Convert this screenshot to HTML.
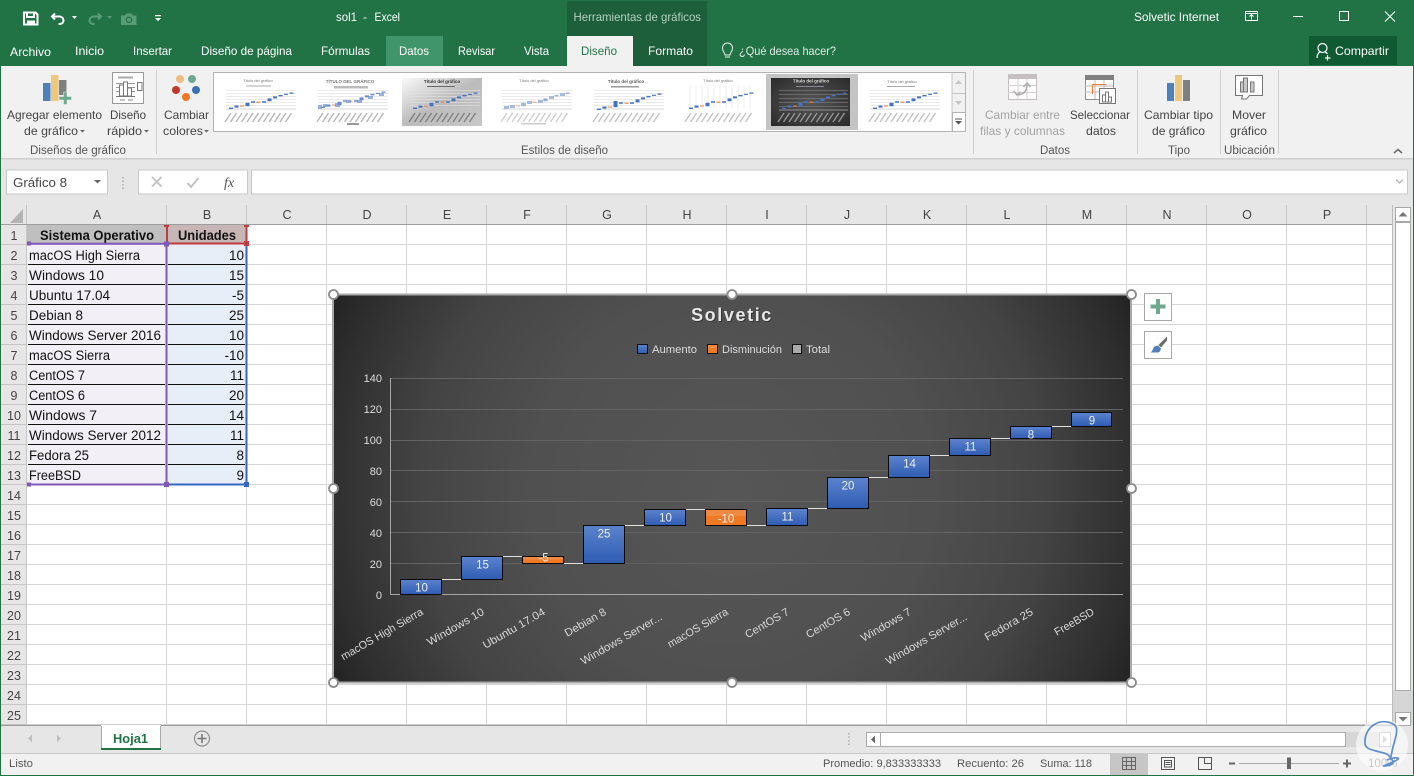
<!DOCTYPE html>
<html><head><meta charset="utf-8"><title>sol1 - Excel</title>
<style>
html,body{margin:0;padding:0;background:#fff;overflow:hidden}
svg{display:block;font-family:"Liberation Sans",sans-serif}
.t{fill:#fff;font-size:12px}
.r{fill:#444;font-size:12px}
.g{fill:#555;font-size:11.5px}
.c{fill:#111;font-size:13.5px}
.n{fill:#111;font-size:13.5px;text-anchor:end}
.h{fill:#444;font-size:12.5px;text-anchor:middle}
.w{fill:#eee;font-size:11.5px;text-anchor:middle}
.y{fill:#ddd;font-size:11px;text-anchor:end}
.l{fill:#d8d8d8;font-size:11px;text-anchor:end}
.s{fill:#555;font-size:11px}
.m{font-size:4px;text-anchor:middle;fill:#777}
</style></head><body>
<svg width="1414" height="776" viewBox="0 0 1414 776" xmlns="http://www.w3.org/2000/svg">
<defs>
<radialGradient id="bg" gradientUnits="userSpaceOnUse" cx="732" cy="490" r="445">
<stop offset="0" stop-color="#565656"/><stop offset=".45" stop-color="#505050"/><stop offset=".7" stop-color="#444"/><stop offset=".9" stop-color="#2f2f2f"/><stop offset="1" stop-color="#222"/>
</radialGradient>
<linearGradient id="bl" x1="0" y1="0" x2="0" y2="1"><stop offset="0" stop-color="#5b83ce"/><stop offset="1" stop-color="#2f5cb2"/></linearGradient>
<linearGradient id="or" x1="0" y1="0" x2="0" y2="1"><stop offset="0" stop-color="#f08a42"/><stop offset=".4" stop-color="#f08a42"/><stop offset=".41" stop-color="#ee7a26"/><stop offset="1" stop-color="#ee7a26"/></linearGradient>
<linearGradient id="gy" x1="0" y1="0" x2="1" y2="1"><stop offset="0" stop-color="#fafafa"/><stop offset=".5" stop-color="#bbb"/><stop offset="1" stop-color="#c8c8c8"/></linearGradient>
<radialGradient id="dk" cx=".5" cy=".5" r=".7"><stop offset="0" stop-color="#575757"/><stop offset="1" stop-color="#2a2a2a"/></radialGradient>
<g id="tb">
<path fill="#4472c4" d="M11 29.600h4V31h-4zM16.500 27.500h4v2.100h-4zM27.500 24.700h4v3.500h-4zM33 23.300h4v1.400h-4zM44 23.200h4v1.500h-4zM49.500 20.400h4v2.800h-4zM55 18.400h4v2h-4zM60.500 16.900h4v1.500h-4zM66 15.700h4v1.200h-4zM71.500 14.500h4v1.200h-4z"/>
<path fill="#ed7d31" d="M22 27.500h4v1h-4zM38.500 23.600h4v1.100h-4z"/>
</g>
<g id="tg"><path stroke="#e4e4e4" stroke-width=".7" fill="none" d="M8 12.500H78M8 15.500H78M8 18.500H78M8 21.500H78M8 24.500H78M8 27.500H78"/><path stroke="#c8c8c8" stroke-width=".7" d="M8 31H78"/></g>
<g id="tl" stroke-width="1.400" fill="none" opacity=".7"><path d="M7 44l6-9M12.500 44l6-9M18 44l6-9M23.500 44l6-9M29 44l6-9M34.500 44l6-9M40 44l6-9M45.500 44l6-9M51 44l6-9M56.500 44l6-9M62 44l6-9M67.500 44l6-9"/></g>
<circle id="hd" r="4.500" fill="#fff" stroke="#8c8c8c" stroke-width="1.800"/>
</defs>

<!-- Window base -->
<rect width="1414" height="776" fill="#e6e6e6"/>
<rect width="1414" height="66" fill="#217346"/>
<rect x="0" y="66" width="1414" height="92" fill="#f1f1f1"/>
<rect x="0" y="158" width="1414" height="1.500" fill="#cfcfcf"/>

<!-- QAT -->
<g fill="none" stroke="#fff">
<path stroke-width="2" d="M24 12.500h11.500l2 2v10h-13.500z"/>
<path stroke-width="2" d="M27 13v4h7v-4"/><rect x="27" y="20.500" width="8" height="4" fill="#fff" stroke="none"/>
<path stroke-width="2" d="M55 13.500l-3 3 3 3M52.500 16.500h7a4 4 0 0 1 4 4 3.500 3.500 0 0 1-3.500 3.500h-1.500"/>
</g>
<path fill="#fff" d="M72 16h5l-2.500 3z"/>
<g fill="none" stroke="#5a9b78" stroke-width="2"><path d="M98 13.500l3 3-3 3M100.500 16.500h-7a4 4 0 0 0-4 4 3.500 3.500 0 0 0 3.500 3.500h1.500"/></g>
<path fill="#5a9b78" d="M107 16h5l-2.500 3zM121 15.500h4l1.500-2h5l1.500 2h3.500v9.500h-15.500z"/><circle cx="129" cy="19.800" r="2.700" fill="none" stroke="#217346" stroke-width="1.200"/>
<path fill="#fff" d="M155 15h6v1.300h-6zM155 18h6l-3 3.200z"/>
<text class="t" x="336" y="21" textLength="21" lengthAdjust="spacingAndGlyphs">sol1</text>
<text class="t" x="363" y="21">-</text>
<text class="t" x="374.500" y="21" textLength="25.500" lengthAdjust="spacingAndGlyphs">Excel</text>

<!-- contextual tab -->
<rect x="567" y="1" width="140" height="65" fill="#1d5e3b"/>
<text x="573.500" y="21" textLength="127.500" lengthAdjust="spacingAndGlyphs" style="font-size:12px;fill:#b3d1c1">Herramientas de gráficos</text>

<!-- right title -->
<text class="t" x="1134" y="21" textLength="85" lengthAdjust="spacingAndGlyphs">Solvetic Internet</text>
<g fill="none" stroke="#fff" stroke-width="1"><rect x="1245.500" y="11.500" width="12" height="9"/><path d="M1245.500 13.500h12M1251.500 19.500v-4.500M1249.500 16.500l2-2 2 2"/>
<path d="M1293 16.500h10M1339.500 11.500h9v9h-9zM1385 11.500l10 10M1395 11.500l-10 10"/></g>

<!-- tabs -->
<rect x="386" y="36" width="57" height="30" fill="#41956a"/>
<rect x="567" y="36" width="66" height="30" fill="#f1f1f1"/>
<text class="t" x="10" y="56" textLength="41" lengthAdjust="spacingAndGlyphs">Archivo</text>
<text class="t" x="75" y="55" textLength="29" lengthAdjust="spacingAndGlyphs">Inicio</text>
<text class="t" x="133" y="55" textLength="39" lengthAdjust="spacingAndGlyphs">Insertar</text>
<text class="t" x="201" y="55" textLength="91" lengthAdjust="spacingAndGlyphs">Diseño de página</text>
<text class="t" x="321" y="55" textLength="49" lengthAdjust="spacingAndGlyphs">Fórmulas</text>
<text class="t" x="399" y="55" textLength="30" lengthAdjust="spacingAndGlyphs">Datos</text>
<text class="t" x="458" y="55" textLength="37" lengthAdjust="spacingAndGlyphs">Revisar</text>
<text class="t" x="524" y="55" textLength="25" lengthAdjust="spacingAndGlyphs">Vista</text>
<text x="581" y="55" textLength="36" lengthAdjust="spacingAndGlyphs" style="font-size:12px;fill:#217346">Diseño</text>
<text class="t" x="648" y="55" textLength="45" lengthAdjust="spacingAndGlyphs">Formato</text>
<g fill="none" stroke="#e6f0ea" stroke-width="1"><path d="M725 55c0-2-2.500-3.500-2.500-7a5 5 0 0 1 10 0c0 3.500-2.500 5-2.500 7zM725 57h5"/></g>
<text x="739" y="55" textLength="97" lengthAdjust="spacingAndGlyphs" style="font-size:12px;fill:#e0ebe5">¿Qué desea hacer?</text>
<rect x="1309" y="36" width="88" height="29" fill="#0f5a32"/>
<g fill="none" stroke="#fff" stroke-width="1.200"><circle cx="1322.500" cy="48" r="4.500"/><path d="M1317 58c0-4 2-6 4-6.500M1325 52c1 .3 2 1 2.500 2M1327.500 55v5.500M1325 58h5.500"/></g>
<text class="t" x="1335" y="55" textLength="54" lengthAdjust="spacingAndGlyphs">Compartir</text>

<!-- Ribbon: separators -->
<path stroke="#d0d0d0" d="M156.500 70v84M973.500 70v84M1137.500 70v84M1220.500 70v84M1278.500 70v84"/>

<!-- Agregar elemento -->
<rect x="43" y="83" width="7.500" height="18" fill="#4f81b8"/><rect x="51" y="75" width="7.500" height="26" fill="#edc77d"/><rect x="59" y="80" width="7.500" height="15" fill="#7f7f7f"/>
<path fill="#6fa98f" d="M63.500 92h3.500v4.500h4.500v3.500H67v4.500h-3.500V100H59v-3.500h4.500z" stroke="#f1f1f1" stroke-width=".5"/>
<text class="r" x="7" y="119" textLength="95" lengthAdjust="spacingAndGlyphs">Agregar elemento</text>
<text class="r" x="24" y="135" textLength="54" lengthAdjust="spacingAndGlyphs">de gráfico</text><path fill="#666" d="M80 130h5l-2.500 2.500z"/>

<!-- Diseno rapido -->
<rect x="112.500" y="72.500" width="31" height="31" fill="#fff" stroke="#9a9a9a"/>
<path stroke="#aaa" stroke-width="2" d="M118 77.500h15"/><path fill="none" stroke="#999" d="M116 83.500h19M116 87.500h19M116 91.500h19"/>
<path fill="#fff" stroke="#777" d="M119.500 96v-11h4v11zM123.500 96v-14h4v14zM127.500 96v-8h4v8z"/><path stroke="#777" d="M116 96.500h19"/>
<rect x="137.500" y="82.500" width="4.500" height="8" fill="#fff" stroke="#777"/>
<path stroke="#888" d="M120 100h5M128 100h5"/>
<text class="r" x="110" y="119" textLength="36" lengthAdjust="spacingAndGlyphs">Diseño</text>
<text class="r" x="107" y="135" textLength="35" lengthAdjust="spacingAndGlyphs">rápido</text><path fill="#666" d="M144 130h5l-2.500 2.500z"/>

<!-- Cambiar colores -->
<circle cx="180" cy="79" r="4" fill="#eebc80"/><circle cx="192" cy="79" r="4" fill="#70a78f"/><circle cx="176" cy="90" r="4" fill="#c0392b"/><circle cx="196" cy="90" r="4" fill="#3a70b5"/><circle cx="186" cy="97" r="4" fill="#ee7724"/>
<text class="r" x="164" y="119" textLength="45" lengthAdjust="spacingAndGlyphs">Cambiar</text>
<text class="r" x="163" y="135" textLength="40" lengthAdjust="spacingAndGlyphs">colores</text><path fill="#666" d="M204 130h5l-2.500 2.500z"/>
<text class="g" x="30" y="154" textLength="96" lengthAdjust="spacingAndGlyphs">Diseños de gráfico</text>

<!-- Gallery -->
<rect x="213.500" y="72.500" width="752" height="59" fill="#fff" stroke="#b4b4b4"/>
<rect x="766" y="74" width="92" height="56" fill="#c4c4c4"/>
<g transform="translate(218,78)"><text class="m" x="40" y="4">Título del gráfico</text><rect x="28" y="7.500" width="25" height="1" fill="#aaa"/><use href="#tg"/><use href="#tb"/><g stroke="#999"><use href="#tl"/></g></g>
<g transform="translate(310,78)"><text class="m" x="40" y="5" style="font-weight:bold;font-size:4.500px">TÍTULO DEL GRÁFICO</text><rect x="24" y="8" width="34" height="2.500" fill="#bbb"/><use href="#tg"/><g opacity=".8"><use href="#tb" transform="translate(0,-1)"/></g><path fill="#6f93d0" d="M8 27h4v4H8zM13 26h4v3h-4zM25 25h5v4h-5zM36 22h5v3h-5zM47 22h5v3h-5zM58 18h5v3h-5zM69 15h5v3h-5z" opacity=".7"/><g stroke="#999"><use href="#tl"/></g><rect x="37" y="45" width="12" height="2" fill="#999"/></g>
<rect x="402" y="78" width="80" height="48" fill="url(#gy)"/>
<g transform="translate(402,78)"><text class="m" x="40" y="5" style="font-weight:bold;font-size:4.500px;fill:#333">Título del gráfico</text><rect x="25" y="8" width="28" height="1" fill="#666"/><g opacity=".8"><use href="#tg"/></g><use href="#tb"/><g stroke="#666"><use href="#tl"/></g></g>
<g transform="translate(494,78)"><text class="m" x="40" y="4">Título del gráfico</text><use href="#tg"/><g opacity=".55"><use href="#tb"/></g><path fill="#a9bbdd" d="M10 28h5v3h-5zM16 27h5v3h-5zM27 25h5v3h-5zM33 23h5v3h-5zM44 22h5v3h-5zM55 18h5v3h-5zM66 15h5v3h-5z"/><g stroke="#bbb"><use href="#tl"/></g><rect x="27" y="45" width="25" height="1.500" fill="#ccc"/></g>
<g transform="translate(586,78)"><text class="m" x="40" y="5" style="font-weight:bold;font-size:4.500px;fill:#555">Título del gráfico</text><rect x="25" y="8" width="28" height="1.500" fill="#999"/><use href="#tg"/><use href="#tb" transform="translate(0,1)"/><path fill="#4472c4" d="M27.500 23h4v6h-4z"/><g stroke="#aaa"><use href="#tl"/></g></g>
<g transform="translate(678,78)"><text class="m" x="40" y="4">Título del gráfico</text><path stroke="#e6e6e6" stroke-width=".7" d="M12 7V30M18 7V30M24 7V30M30 7V30M36 7V30M42 7V30M48 7V30M54 7V30M60 7V30M66 7V30M72 7V30"/><use href="#tb"/><g stroke="#aaa"><use href="#tl"/></g></g>
<rect x="771" y="78" width="79" height="48" fill="url(#dk)"/>
<g transform="translate(771,78)"><text class="m" x="40" y="4.500" style="font-weight:bold;font-size:4.500px;fill:#ddd">Título del gráfico</text><rect x="25" y="8" width="28" height="1" fill="#889"/><path stroke="#777" stroke-width=".7" d="M8 12.500H77M8 16.500H77M8 20.500H77M8 24.500H77M8 28.500H77"/><path stroke="#aaa" stroke-width=".7" d="M8 32H77"/><use href="#tb"/><g stroke="#bbb"><use href="#tl"/></g></g>
<g transform="translate(862,78)"><text class="m" x="40" y="5">Título del gráfico</text><rect x="25" y="8" width="28" height="1" fill="#aaa"/><use href="#tg"/><use href="#tb"/><g stroke="#aaa"><use href="#tl"/></g></g>
<rect x="952" y="73" width="13" height="58" fill="#f1f1f1"/>
<path stroke="#c4c4c4" fill="none" d="M952 72.500v59M952 93.500h13M952 112.500h13"/>
<rect x="952.500" y="112.500" width="13" height="19" fill="#fff" stroke="#b4b4b4"/>
<path fill="#c6c6c6" d="M955 84l3.500-4 3.500 4zM955 101h7l-3.500 4z"/>
<path fill="#555" d="M955 118.500h7v1h-7zM955 121h7l-3.500 3.500z"/>
<text class="g" x="521" y="154" textLength="87" lengthAdjust="spacingAndGlyphs">Estilos de diseño</text>

<!-- Datos -->
<g opacity=".95"><rect x="1008.500" y="74.500" width="28" height="25" fill="#fff" stroke="#c4bdc0"/><rect x="1008" y="74" width="29" height="5" fill="#c4bdc0"/><path stroke="#d4cfd1" d="M1018 79v20M1027 79v20M1008 85.500h28M1008 92.500h28"/><path fill="none" stroke="#a8a8a8" stroke-width="1.500" d="M1017 95c6 0 10-4 10-10M1013.500 91l3.500 4 3.500-3M1023.500 87l3.500-4 3.500 4"/></g>
<text x="985" y="119" textLength="75" lengthAdjust="spacingAndGlyphs" style="font-size:12px;fill:#a3a3a3">Cambiar entre</text>
<text x="980" y="135" textLength="85" lengthAdjust="spacingAndGlyphs" style="font-size:12px;fill:#a3a3a3">filas y columnas</text>
<rect x="1085.500" y="75.500" width="28" height="24" fill="#fff" stroke="#909090"/><rect x="1085" y="75" width="29" height="5" fill="#7f7f7f"/><path stroke="#bbb" d="M1095 80v19M1104 80v19M1085 86h28M1085 92h28"/><path fill="none" stroke="#ed7d31" d="M1092.500 94v-9.500h14"/>
<rect x="1099.500" y="88.500" width="16" height="15" fill="#fff" stroke="#777"/><path fill="#fff" stroke="#777" d="M1102.500 102v-7h3v7zM1105.500 102v-10h3v10zM1108.500 102v-5h3v5z"/>
<text class="r" x="1070" y="119" textLength="60" lengthAdjust="spacingAndGlyphs">Seleccionar</text>
<text class="r" x="1086" y="135" textLength="30" lengthAdjust="spacingAndGlyphs">datos</text>
<text class="g" x="1040" y="154" textLength="30" lengthAdjust="spacingAndGlyphs">Datos</text>

<!-- Tipo -->
<rect x="1167" y="83" width="7" height="18" fill="#4f81b8"/><rect x="1175" y="75" width="7" height="26" fill="#edc77d"/><rect x="1183" y="80" width="7" height="21" fill="#7f7f7f"/>
<text class="r" x="1144" y="119" textLength="69" lengthAdjust="spacingAndGlyphs">Cambiar tipo</text>
<text class="r" x="1152" y="135" textLength="53" lengthAdjust="spacingAndGlyphs">de gráfico</text>
<text class="g" x="1168" y="154" textLength="22" lengthAdjust="spacingAndGlyphs">Tipo</text>

<!-- Ubicacion -->
<path fill="#fff" stroke="#777" d="M1235.500 75.500h27v20h-13l-3 3.500h-5l1-3.500h-7z"/>
<path fill="#c8c8c8" stroke="#777" d="M1240.500 92v-10h3v10zM1243.500 92v-14h4v14zM1250.500 92v-10h3.500v10z"/>
<text class="r" x="1232" y="119" textLength="34" lengthAdjust="spacingAndGlyphs">Mover</text>
<text class="r" x="1230" y="135" textLength="37" lengthAdjust="spacingAndGlyphs">gráfico</text>
<text class="g" x="1224" y="154" textLength="51" lengthAdjust="spacingAndGlyphs">Ubicación</text>
<path fill="none" stroke="#666" stroke-width="1.500" d="M1394 153l4-3.500 4 3.500"/>

<!-- Formula bar -->
<rect x="6.500" y="170" width="101" height="24" fill="#fff" stroke="#c8c8c8"/>
<text x="13" y="187" textLength="54" lengthAdjust="spacingAndGlyphs" style="font-size:12.500px;fill:#444">Gráfico 8</text>
<path fill="#666" d="M94 180h7l-3.500 3.500z"/>
<path stroke="#aaa" stroke-width="1.500" stroke-dasharray="1.500 2" d="M123 177v12"/>
<rect x="138.500" y="170" width="109" height="24" fill="#fff" stroke="#c8c8c8"/>
<path fill="none" stroke="#c0c0c0" stroke-width="1.800" d="M152 177l9.500 9.500M161.500 177l-9.500 9.500M187.500 183l3.500 4 7.500-9"/>
<text x="224" y="187" style="font-family:'Liberation Serif',serif;font-style:italic;font-size:14px;fill:#555">fx</text>
<rect x="251.500" y="170" width="1156" height="24" fill="#fff" stroke="#c8c8c8"/>
<path fill="none" stroke="#bbb" stroke-width="1.500" d="M1396 179.500l3.500 3.500 3.500-3.500"/>

<!-- Sheet -->
<rect x="1" y="225" width="1391" height="500" fill="#fff"/>
<rect x="1" y="205" width="1392" height="19" fill="#e6e6e6"/>
<rect x="1" y="224" width="25" height="501" fill="#e6e6e6"/>
<path fill="#b4b4b4" d="M23 209v14H10z"/>
<path stroke="#d6d6d6" fill="none" d="M26.500 224.500H1392M26.500 244.500H1392M26.500 264.500H1392M26.500 284.500H1392M26.500 304.500H1392M26.500 324.500H1392M26.500 344.500H1392M26.500 364.500H1392M26.500 384.500H1392M26.500 404.500H1392M26.500 424.500H1392M26.500 444.500H1392M26.500 464.500H1392M26.500 484.500H1392M26.500 504.500H1392M26.500 524.500H1392M26.500 544.500H1392M26.500 564.500H1392M26.500 584.500H1392M26.500 604.500H1392M26.500 624.500H1392M26.500 644.500H1392M26.500 664.500H1392M26.500 684.500H1392M26.500 704.500H1392M166.500 224V724M246.500 224V724M326.500 224V724M406.500 224V724M486.500 224V724M566.500 224V724M646.500 224V724M726.500 224V724M806.500 224V724M886.500 224V724M966.500 224V724M1046.500 224V724M1126.500 224V724M1206.500 224V724M1286.500 224V724M1366.500 224V724"/>
<path stroke="#c6c6c6" fill="none" d="M1 244.500H26M1 264.500H26M1 284.500H26M1 304.500H26M1 324.500H26M1 344.500H26M1 364.500H26M1 384.500H26M1 404.500H26M1 424.500H26M1 444.500H26M1 464.500H26M1 484.500H26M1 504.500H26M1 524.500H26M1 544.500H26M1 564.500H26M1 584.500H26M1 604.500H26M1 624.500H26M1 644.500H26M1 664.500H26M1 684.500H26M1 704.500H26M26.500 205V724M166.500 205V224M246.500 205V224M326.500 205V224M406.500 205V224M486.500 205V224M566.500 205V224M646.500 205V224M726.500 205V224M806.500 205V224M886.500 205V224M966.500 205V224M1046.500 205V224M1126.500 205V224M1206.500 205V224M1286.500 205V224M1366.500 205V224"/>
<path stroke="#9e9e9e" d="M1 224.500H1392"/>
<g>
<text class="h" x="97" y="219">A</text><text class="h" x="207" y="219">B</text><text class="h" x="287" y="219">C</text><text class="h" x="367" y="219">D</text><text class="h" x="447" y="219">E</text><text class="h" x="527" y="219">F</text><text class="h" x="607" y="219">G</text><text class="h" x="687" y="219">H</text><text class="h" x="767" y="219">I</text><text class="h" x="847" y="219">J</text><text class="h" x="927" y="219">K</text><text class="h" x="1007" y="219">L</text><text class="h" x="1087" y="219">M</text><text class="h" x="1167" y="219">N</text><text class="h" x="1247" y="219">O</text><text class="h" x="1327" y="219">P</text>
<text class="h" x="14" y="240">1</text><text class="h" x="14" y="260">2</text><text class="h" x="14" y="280">3</text><text class="h" x="14" y="300">4</text><text class="h" x="14" y="320">5</text><text class="h" x="14" y="340">6</text><text class="h" x="14" y="360">7</text><text class="h" x="14" y="380">8</text><text class="h" x="14" y="400">9</text><text class="h" x="14" y="420">10</text><text class="h" x="14" y="440">11</text><text class="h" x="14" y="460">12</text><text class="h" x="14" y="480">13</text><text class="h" x="14" y="500">14</text><text class="h" x="14" y="520">15</text><text class="h" x="14" y="540">16</text><text class="h" x="14" y="560">17</text><text class="h" x="14" y="580">18</text><text class="h" x="14" y="600">19</text><text class="h" x="14" y="620">20</text><text class="h" x="14" y="640">21</text><text class="h" x="14" y="660">22</text><text class="h" x="14" y="680">23</text><text class="h" x="14" y="700">24</text><text class="h" x="14" y="720">25</text>
</g>

<!-- table -->
<rect x="27" y="225" width="139" height="19" fill="#bfbfbf"/>
<rect x="167" y="225" width="79" height="19" fill="#c6b6b5"/>
<rect x="27" y="244" width="139" height="240" fill="#f2eff7"/>
<rect x="167" y="244" width="79" height="240" fill="#e8eef8"/>
<path stroke="#111" fill="none" d="M28 264.500H165M28 284.500H165M28 304.500H165M28 324.500H165M28 344.500H165M28 364.500H165M28 384.500H165M28 404.500H165M28 424.500H165M28 444.500H165M28 464.500H165M168 264.500H245M168 284.500H245M168 304.500H245M168 324.500H245M168 344.500H245M168 364.500H245M168 384.500H245M168 404.500H245M168 424.500H245M168 444.500H245M168 464.500H245"/>
<text x="40" y="240" textLength="114" lengthAdjust="spacingAndGlyphs" style="font-size:13.500px;font-weight:bold;fill:#111">Sistema Operativo</text>
<text x="178" y="240" textLength="58" lengthAdjust="spacingAndGlyphs" style="font-size:13.500px;font-weight:bold;fill:#111">Unidades</text>
<text class="c" x="29" y="260" textLength="111" lengthAdjust="spacingAndGlyphs">macOS High Sierra</text>
<text class="c" x="29" y="280" textLength="75" lengthAdjust="spacingAndGlyphs">Windows 10</text>
<text class="c" x="29" y="300" textLength="81" lengthAdjust="spacingAndGlyphs">Ubuntu 17.04</text>
<text class="c" x="29" y="320" textLength="54" lengthAdjust="spacingAndGlyphs">Debian 8</text>
<text class="c" x="29" y="340" textLength="132" lengthAdjust="spacingAndGlyphs">Windows Server 2016</text>
<text class="c" x="29" y="360" textLength="81" lengthAdjust="spacingAndGlyphs">macOS Sierra</text>
<text class="c" x="29" y="380" textLength="56" lengthAdjust="spacingAndGlyphs">CentOS 7</text>
<text class="c" x="29" y="400" textLength="56" lengthAdjust="spacingAndGlyphs">CentOS 6</text>
<text class="c" x="29" y="420" textLength="68" lengthAdjust="spacingAndGlyphs">Windows 7</text>
<text class="c" x="29" y="440" textLength="132" lengthAdjust="spacingAndGlyphs">Windows Server 2012</text>
<text class="c" x="29" y="460" textLength="60" lengthAdjust="spacingAndGlyphs">Fedora 25</text>
<text class="c" x="29" y="480" textLength="52" lengthAdjust="spacingAndGlyphs">FreeBSD</text>
<text class="n" x="244" y="260">10</text><text class="n" x="244" y="280">15</text><text class="n" x="244" y="300">-5</text><text class="n" x="244" y="320">25</text><text class="n" x="244" y="340">10</text><text class="n" x="244" y="360">-10</text><text class="n" x="244" y="380">11</text><text class="n" x="244" y="400">20</text><text class="n" x="244" y="420">14</text><text class="n" x="244" y="440">11</text><text class="n" x="244" y="460">8</text><text class="n" x="244" y="480">9</text>
<!-- range outlines -->
<path fill="none" stroke="#7e57b8" stroke-width="2" d="M27.500 243.700H166.500V484.500H27.500"/>
<path fill="none" stroke="#3468c0" stroke-width="2" d="M167 484.500H246.500V244"/>
<path fill="none" stroke="#c23b3f" stroke-width="2" d="M167 226V243.500H246.500V226"/>
<path fill="#c23b3f" d="M164 225h5v2h-5zM244 225h5v2h-5zM244 241h5v5h-5z"/>
<path fill="#7e57b8" d="M27 241.500h4v4h-4zM164 241.500h5v5h-5zM27 482.500h4v4h-4zM164 482h5v5h-5z"/>
<rect x="244" y="482" width="5" height="5" fill="#3468c0"/>

<!-- Chart -->
<rect x="333" y="294.500" width="798" height="388" fill="url(#bg)" stroke="#a8a8a8" stroke-width="2"/>
<text x="733" y="322" text-anchor="middle" fill="#222" opacity=".6" style="font-size:18px;font-weight:bold;letter-spacing:1.600px">Solvetic</text>
<text x="732" y="321" text-anchor="middle" fill="#e8e8e8" style="font-size:18px;font-weight:bold;letter-spacing:1.600px">Solvetic</text>
<rect x="637.500" y="344.500" width="10" height="9" fill="url(#bl)" stroke="#111"/>
<rect x="707.500" y="344.500" width="10" height="9" fill="url(#or)" stroke="#111"/>
<rect x="792.500" y="344.500" width="9" height="9" fill="#aaa" stroke="#111"/>
<text x="652" y="353" textLength="45" lengthAdjust="spacingAndGlyphs" style="font-size:11px;fill:#ddd">Aumento</text>
<text x="722" y="353" textLength="60" lengthAdjust="spacingAndGlyphs" style="font-size:11px;fill:#ddd">Disminución</text>
<text x="806" y="353" textLength="24" lengthAdjust="spacingAndGlyphs" style="font-size:11px;fill:#ddd">Total</text>
<path stroke="#636363" fill="none" d="M390 378.500H1123M390 409.500H1123M390 440.500H1123M390 470.500H1123M390 501.500H1123M390 532.500H1123M390 563.500H1123"/>
<path stroke="#a6a6a6" fill="none" d="M390.500 378V594.500H1123"/>
<text class="y" x="382" y="382">140</text><text class="y" x="382" y="413">120</text><text class="y" x="382" y="444">100</text><text class="y" x="382" y="475">80</text><text class="y" x="382" y="506">60</text><text class="y" x="382" y="537">40</text><text class="y" x="382" y="568">20</text><text class="y" x="382" y="599">0</text>
<!-- connectors -->
<path stroke="#e0e0e0" fill="none" d="M441 579.500H462M502 556.500H523M563 563.500H584M624 525.500H645M685 509.500H706M746 525.500H767M807 508.500H828M868 477.500H889M929 455.500H950M990 438.500H1011M1051 426.500H1072"/>
<!-- bars -->
<g stroke="#0a0a0a" stroke-width="1">
<rect x="400.500" y="579.500" width="41" height="15" fill="url(#bl)"/>
<rect x="461.500" y="556.500" width="41" height="23" fill="url(#bl)"/>
<rect x="522.500" y="556.500" width="41" height="7" fill="url(#or)"/>
<rect x="583.500" y="525.500" width="41" height="38" fill="url(#bl)"/>
<rect x="644.500" y="509.500" width="41" height="16" fill="url(#bl)"/>
<rect x="705.500" y="509.500" width="41" height="16" fill="url(#or)"/>
<rect x="766.500" y="508.500" width="41" height="17" fill="url(#bl)"/>
<rect x="827.500" y="477.500" width="41" height="31" fill="url(#bl)"/>
<rect x="888.500" y="455.500" width="41" height="22" fill="url(#bl)"/>
<rect x="949.500" y="438.500" width="41" height="17" fill="url(#bl)"/>
<rect x="1010.500" y="426.500" width="41" height="12" fill="url(#bl)"/>
<rect x="1071.500" y="412.500" width="40" height="14" fill="url(#bl)"/>
</g>
<text class="w" x="421.500" y="591.500">10</text><text class="w" x="482.500" y="568.500">15</text><text class="w" x="543.500" y="561.500">-5</text><text class="w" x="604" y="537.500">25</text><text class="w" x="665.500" y="521.500">10</text><text class="w" x="726" y="522.500">-10</text><text class="w" x="787.500" y="520.500">11</text><text class="w" x="848" y="489.500">20</text><text class="w" x="909.500" y="467.500">14</text><text class="w" x="970.500" y="450.500">11</text><text class="w" x="1031" y="438.500">8</text><text class="w" x="1092" y="424.500">9</text>
<text class="l" transform="translate(424,614) rotate(-30)" textLength="93" lengthAdjust="spacingAndGlyphs">macOS High Sierra</text>
<text class="l" transform="translate(485,614) rotate(-30)" textLength="64" lengthAdjust="spacingAndGlyphs">Windows 10</text>
<text class="l" transform="translate(546,614) rotate(-30)" textLength="70" lengthAdjust="spacingAndGlyphs">Ubuntu 17.04</text>
<text class="l" transform="translate(607,614) rotate(-30)" textLength="46" lengthAdjust="spacingAndGlyphs">Debian 8</text>
<text class="l" transform="translate(663,619) rotate(-30)" textLength="92" lengthAdjust="spacingAndGlyphs">Windows Server...</text>
<text class="l" transform="translate(729,614) rotate(-30)" textLength="68" lengthAdjust="spacingAndGlyphs">macOS Sierra</text>
<text class="l" transform="translate(790,614) rotate(-30)" textLength="49" lengthAdjust="spacingAndGlyphs">CentOS 7</text>
<text class="l" transform="translate(851,614) rotate(-30)" textLength="49" lengthAdjust="spacingAndGlyphs">CentOS 6</text>
<text class="l" transform="translate(912,614) rotate(-30)" textLength="56" lengthAdjust="spacingAndGlyphs">Windows 7</text>
<text class="l" transform="translate(968,619) rotate(-30)" textLength="92" lengthAdjust="spacingAndGlyphs">Windows Server...</text>
<text class="l" transform="translate(1034,614) rotate(-30)" textLength="54" lengthAdjust="spacingAndGlyphs">Fedora 25</text>
<text class="l" transform="translate(1095,614) rotate(-30)" textLength="44" lengthAdjust="spacingAndGlyphs">FreeBSD</text>
<use href="#hd" x="333.500" y="294.500"/><use href="#hd" x="732" y="294.500"/><use href="#hd" x="1131.500" y="294.500"/><use href="#hd" x="333.500" y="488.500"/><use href="#hd" x="1131.500" y="488.500"/><use href="#hd" x="333.500" y="682.500"/><use href="#hd" x="732" y="682.500"/><use href="#hd" x="1131.500" y="682.500"/>
<!-- Chart side buttons -->
<rect x="1144.500" y="293.500" width="27" height="27" fill="#fff" stroke="#a8a8a8"/>
<path fill="#6fa98f" d="M1156 299h4v5.500h5.500v4H1160v5.500h-4v-5.500h-5.500v-4h5.500z"/>
<rect x="1144.500" y="331.500" width="27" height="27" fill="#fff" stroke="#a8a8a8"/>
<path fill="#6b6b6b" d="M1167 336.500v4l-6 7-2.500-2.500z"/><path fill="#4f81bd" d="M1158 345.500l3 3c-.5 2.500-2 4-3 4h-7.500c2-1 2.500-4.500 4-6z"/>

<!-- Scrollbar vertical -->
<rect x="1392" y="205" width="21" height="520" fill="#e6e6e6"/>
<rect x="1393" y="690" width="20" height="35" fill="#d6d6d6"/>
<rect x="1395.500" y="207.500" width="15" height="14" fill="#fff" stroke="#a8a8a8"/>
<path fill="#777" d="M1398.500 216.500h9l-4.500-4.500z"/>
<rect x="1395.500" y="222.500" width="15" height="468" fill="#fff" stroke="#a8a8a8"/>
<rect x="1395.500" y="712.500" width="15" height="13" fill="#fff" stroke="#a8a8a8"/>
<path fill="#777" d="M1398.500 717h9l-4.500 4.500z"/>
<rect x="1392" y="205" width="1" height="520" fill="#bbb"/>

<!-- Tab bar -->
<rect x="1" y="724.500" width="1392" height="1.500" fill="#9c9c9c"/>
<rect x="101" y="725" width="60" height="24" fill="#fff"/>
<path stroke="#aaa" fill="none" d="M101.500 726v24M160.500 726v24"/>
<rect x="101" y="748" width="60" height="2" fill="#217346"/>
<text x="113" y="743" textLength="35" lengthAdjust="spacingAndGlyphs" style="font-size:13px;font-weight:bold;fill:#217346">Hoja1</text>
<path fill="#c0c0c0" d="M32 734.500v8l-4-4zM57 734.500l4 4-4 4z"/>
<circle cx="202" cy="738.500" r="7.500" fill="none" stroke="#8f8f8f" stroke-width="1.200"/><path stroke="#777" stroke-width="1.600" d="M197.500 738.500h9M202 734v9"/>
<path stroke="#aaa" stroke-width="1.500" stroke-dasharray="1.500 2" d="M849 733v12"/>
<rect x="1346" y="732" width="34" height="15" fill="#d6d6d6"/>
<rect x="866.500" y="732.500" width="479" height="14" fill="#fff" stroke="#aaa"/>
<rect x="866.500" y="732.500" width="14" height="14" fill="#fff" stroke="#aaa"/>
<path fill="#666" d="M875 735.500v8l-4-4z"/>
<rect x="1379.500" y="732.500" width="11" height="14" fill="#fff" stroke="#aaa"/>
<path fill="#aaa" d="M1383 735.500v8l4-4z"/>
<rect x="0" y="753" width="1414" height="1" fill="#c8c8c8"/>

<!-- Status bar -->
<rect x="1" y="754" width="1412" height="21" fill="#f1f1f1"/>
<text class="s" x="9" y="767" textLength="24" lengthAdjust="spacingAndGlyphs">Listo</text>
<text class="s" x="823" y="767" textLength="118" lengthAdjust="spacingAndGlyphs">Promedio: 9,833333333</text>
<text class="s" x="957" y="767" textLength="67" lengthAdjust="spacingAndGlyphs">Recuento: 26</text>
<text class="s" x="1040" y="767" textLength="52" lengthAdjust="spacingAndGlyphs">Suma: 118</text>
<rect x="1110" y="754" width="38" height="21" fill="#c6c6c6"/>
<path fill="none" stroke="#666" d="M1122.500 757.500h13v12h-13zM1126.500 757.500v12M1131.500 757.500v12M1122.500 761.500h13M1122.500 765.500h13"/>
<path fill="none" stroke="#555" d="M1161.500 757.500h13v12h-13zM1164.500 760.500h7v6.500h-7zM1165.500 762.500h5M1165.500 764.500h5"/>
<path fill="none" stroke="#555" d="M1198.500 757.500h13v12h-13zM1204.500 757.500v6h7"/>
<path fill="#666" d="M1229 762.500h6v2h-6zM1343 762.500h3v-3h2v3h3v2h-3v3h-2v-3h-3z"/>
<path stroke="#aaa" d="M1239 763.500h100"/>
<rect x="1287" y="757.500" width="4" height="11.500" fill="#666"/>
<text x="1368" y="767" style="font-size:11.500px;fill:#777">100%</text>

<!-- Watermark -->
<circle cx="1382" cy="745" r="26" fill="#fff" opacity=".6"/>
<path fill="none" stroke="#5f8fcb" stroke-width="1.700" d="M1378.500 751.700c-7-2-13.500-3-13.500-8.400 0-4 0-7 1.700-10 3-7 10-11.600 16.600-11.600 6.500 0 13.400 2.500 13.400 8.300 0 8-4 15-5 23.300-.3 2-1 3-1 5M1378.500 751.700c4 1 8 1.500 9.800 3.300 2 2 3.500 4 5 6.700M1386.700 760c4-1.500 9-3 11.600-1.700 1.500 1-8 5-15 7.700 4 0 8-1 10-3"/>
<rect x="0" y="0" width="1" height="776" fill="#217346"/>
<rect x="1413" y="0" width="1" height="776" fill="#217346"/>
<rect x="0" y="775" width="1414" height="1" fill="#217346"/>
</svg>
</body></html>
